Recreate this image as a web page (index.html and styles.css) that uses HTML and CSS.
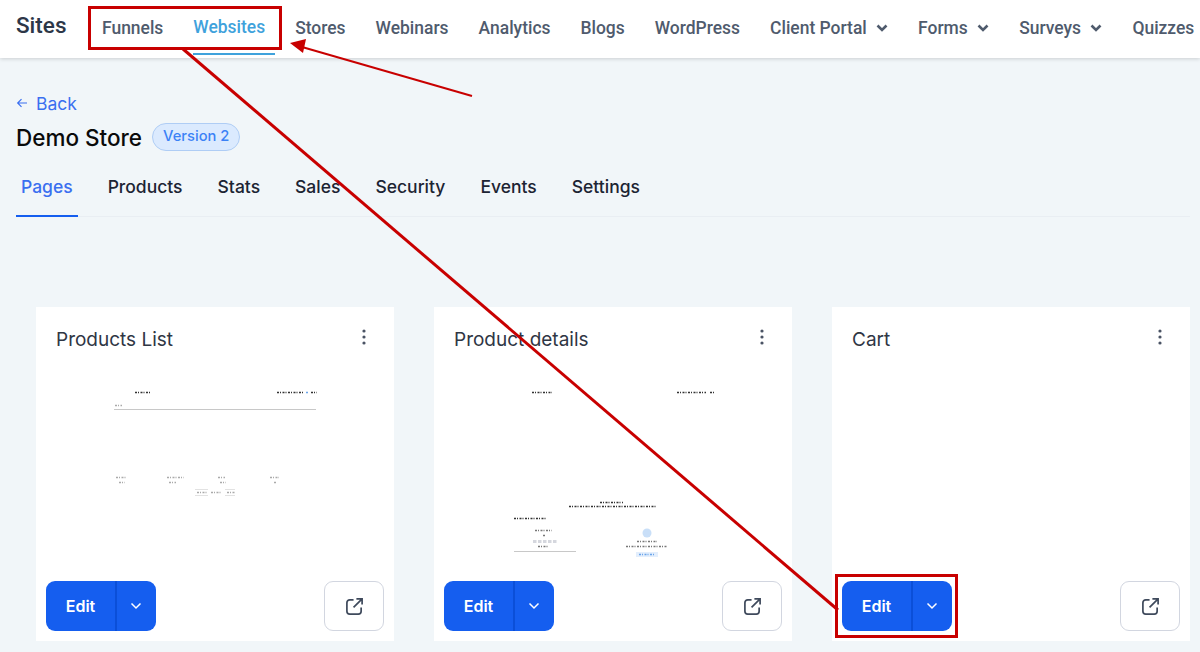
FILE: index.html
```html
<!DOCTYPE html>
<html lang="en">
<head>
    <meta charset="UTF-8">
    <title>Demo Store</title>
    <link rel="stylesheet" href="styles.css">
</head>
<body>
    <header class="top-bar">
        <div class="brand">Sites</div>
        <nav class="top-nav">
            <a>Funnels</a>
            <a class="active">Websites</a>
            <a>Stores</a>
            <a>Webinars</a>
            <a>Analytics</a>
            <a>Blogs</a>
            <a>WordPress</a>
            <a>Client Portal <svg class="caret" viewBox="0 0 12 8"><path d="M1.5 1.5L6 6l4.5-4.5"/></svg></a>
            <a>Forms <svg class="caret" viewBox="0 0 12 8"><path d="M1.5 1.5L6 6l4.5-4.5"/></svg></a>
            <a>Surveys <svg class="caret" viewBox="0 0 12 8"><path d="M1.5 1.5L6 6l4.5-4.5"/></svg></a>
            <a>Quizzes</a>
        </nav>
    </header>

    <main class="content">
        <a class="back"><svg viewBox="0 0 12 12"><path d="M11 6H2M5.5 2.2L1.7 6l3.8 3.8"/></svg>Back</a>
        <div class="title-row">
            <h1>Demo Store</h1>
            <span class="badge">Version 2</span>
        </div>
        <div class="tabs">
            <a class="active">Pages</a>
            <a>Products</a>
            <a>Stats</a>
            <a>Sales</a>
            <a>Security</a>
            <a>Events</a>
            <a>Settings</a>
        </div>

        <div class="cards">
            <div class="card">
                <div class="card-head">
                    <span>Products List</span>
                    <svg class="dots" viewBox="0 0 4 16"><circle cx="2" cy="2" r="1.6"/><circle cx="2" cy="8" r="1.6"/><circle cx="2" cy="14" r="1.6"/></svg>
                </div>
                <!-- scaled down page preview, text is only specks at this size -->
                <svg class="thumb" viewBox="0 0 358 210">
                    <path class="speck" d="M99 21.5H114M241 21.5H268M275 21.5H281"/>
                    <path class="speck-blue" d="M270 21.5H273"/>
                    <path class="speck-pale" d="M79 34.5H86"/>
                    <path class="rule" d="M78 38.5H280"/>
                    <path class="speck-pale" d="M80 106.5H91M131 106.5H148M182 106.5H189M234 106.5H243M83 111.5H89M133 111.5H140M184 111.5H190M238 111.5H241"/>
                    <path class="speck-pale" d="M161 121.5H172M175 121.5H186M191 121.5H199"/>
                    <path class="rule-pale" d="M159 118.5H172M159 124.5H172M189 118.5H199M189 124.5H199"/>
                </svg>
                <div class="card-foot">
                    <div class="edit-group">
                        <button class="edit">Edit</button>
                        <button class="edit-more"><svg viewBox="0 0 12 8"><path d="M1.5 1.5L6 6l4.5-4.5"/></svg></button>
                    </div>
                    <button class="open-link"><svg viewBox="0 0 20 20"><path d="M9 3H5a3 3 0 0 0-3 3v9a3 3 0 0 0 3 3h9a3 3 0 0 0 3-3v-4M12 2h6v6M18 2l-9 9"/></svg></button>
                </div>
            </div>

            <div class="card">
                <div class="card-head">
                    <span>Product details</span>
                    <svg class="dots" viewBox="0 0 4 16"><circle cx="2" cy="2" r="1.6"/><circle cx="2" cy="8" r="1.6"/><circle cx="2" cy="14" r="1.6"/></svg>
                </div>
                <svg class="thumb" viewBox="0 0 358 210">
                    <path class="speck" d="M98 21.5H118M243 21.5H272M276 21.5H281"/>
                    <path class="speck" d="M166 131.5H189M135 135.5H223M80 147.5H113"/>
                    <path class="speck-mid" d="M101 159.5H118M109 164.5H112M104 175.5H114M203 170.5H223M192 175.5H233"/>
                    <path class="stars" d="M99 170.5H123"/>
                    <path class="rule" d="M80 180.5H142"/>
                    <circle cx="213" cy="162" r="4.5" fill="#c9dff8"/>
                    <rect x="202" y="181" width="22" height="5" fill="#e3eefc"/>
                    <path class="speck-blue" d="M205 183.5H221"/>
                </svg>
                <div class="card-foot">
                    <div class="edit-group">
                        <button class="edit">Edit</button>
                        <button class="edit-more"><svg viewBox="0 0 12 8"><path d="M1.5 1.5L6 6l4.5-4.5"/></svg></button>
                    </div>
                    <button class="open-link"><svg viewBox="0 0 20 20"><path d="M9 3H5a3 3 0 0 0-3 3v9a3 3 0 0 0 3 3h9a3 3 0 0 0 3-3v-4M12 2h6v6M18 2l-9 9"/></svg></button>
                </div>
            </div>

            <div class="card">
                <div class="card-head">
                    <span>Cart</span>
                    <svg class="dots" viewBox="0 0 4 16"><circle cx="2" cy="2" r="1.6"/><circle cx="2" cy="8" r="1.6"/><circle cx="2" cy="14" r="1.6"/></svg>
                </div>
                <div class="thumb"></div>
                <div class="card-foot">
                    <div class="edit-group">
                        <button class="edit">Edit</button>
                        <button class="edit-more"><svg viewBox="0 0 12 8"><path d="M1.5 1.5L6 6l4.5-4.5"/></svg></button>
                    </div>
                    <button class="open-link"><svg viewBox="0 0 20 20"><path d="M9 3H5a3 3 0 0 0-3 3v9a3 3 0 0 0 3 3h9a3 3 0 0 0 3-3v-4M12 2h6v6M18 2l-9 9"/></svg></button>
                </div>
            </div>
        </div>
    </main>

    <!-- red annotations drawn over the screenshot -->
    <svg class="marks" viewBox="0 0 1200 652">
        <g fill="none" stroke="#c80000" stroke-width="3">
            <rect x="89.5" y="7.5" width="191" height="41"/>
            <rect x="836.5" y="575.5" width="120" height="61"/>
            <path d="M183 49L838 610"/>
            <path d="M472 96L302 47" stroke-width="2"/>
        </g>
        <path d="M290 43L306 39L303 53Z" fill="#c80000"/>
    </svg>
</body>
</html>
```

FILE: styles.css
```css
html, body {
    height: 652px;
    overflow: hidden;
}
body {
    font-family: Inter, 'Liberation Sans', sans-serif;
    margin: 0;
    padding: 0;
    background-color: #f1f6f9;
    position: relative;
}
.top-bar {
    height: 58px;
    background-color: white;
    box-shadow: 0 1px 4px rgba(0,0,0,0.16);
    display: flex;
    font-family: Roboto, sans-serif;
    padding-left: 16px;
    white-space: nowrap;
    overflow: hidden;
}
.brand {
    font-size: 22.5px;
    font-weight: 500;
    color: #2d3748;
    line-height: 50px;
    width: 86px;
    flex: none;
}
.top-nav {
    display: flex;
    gap: 30px;
    font-size: 17.47px;
    font-weight: 500;
    color: #4f5b6d;
}
.top-nav a {
    line-height: 56px;
    height: 55px;
    display: block;
}
.top-nav a.active {
    color: #3fa2dc;
    line-height: 54px;
    position: relative;
}
.top-nav a.active::after {
    content: "";
    position: absolute;
    left: 0;
    right: -10px;
    bottom: 0;
    height: 2px;
    background-color: #3fa2dc;
}
.caret {
    width: 12px;
    height: 8px;
    margin-left: 5px;
    vertical-align: 2px;
    fill: none;
    stroke: #4f5b6d;
    stroke-width: 2.6;
}
.content {
    padding: 0 10px 0 16px;
}
.back {
    display: flex;
    align-items: center;
    margin-top: 35px;
    height: 20px;
    font-size: 17.5px;
    color: #3a6ff0;
}
.back svg {
    width: 12px;
    height: 12px;
    margin-right: 8px;
    fill: none;
    stroke: #3a6ff0;
    stroke-width: 1.2;
}
.title-row {
    display: flex;
    align-items: center;
    gap: 10px;
    margin-top: 10px;
    height: 28px;
}
h1 {
    margin: 0;
    font-size: 22.5px;
    font-weight: 500;
    color: #0a0a0a;
}
.badge {
    height: 28px;
    line-height: 25px;
    box-sizing: border-box;
    padding: 0 10px;
    font-size: 14.7px;
    font-weight: 500;
    color: #3b82f6;
    background-color: #dbeafe;
    border: 1px solid #afcdf5;
    border-radius: 14px;
}
.tabs {
    display: flex;
    gap: 25px;
    margin-top: 13px;
    height: 52px;
    border-bottom: 1px solid #e9eef3;
    font-size: 17.5px;
    font-weight: 500;
    color: #1c2433;
}
.tabs a {
    padding: 0 5px;
    line-height: 46px;
    height: 51px;
}
.tabs a.active {
    color: #3a6ff0;
    border-bottom: 2px solid #155eef;
}
.cards {
    display: flex;
    gap: 40px;
    margin: 90px 0 0 20px;
}
.card {
    width: 358px;
    height: 334px;
    background-color: white;
    display: flex;
    flex-direction: column;
}
.card-head {
    height: 64px;
    flex: none;
    display: flex;
    justify-content: space-between;
    align-items: center;
    padding: 0 28px 0 20px;
    font-size: 19px;
    color: #2f3644;
    box-sizing: border-box;
}
.dots {
    width: 4px;
    height: 16px;
    fill: #4a5364;
    margin-top: -4px;
}
.thumb {
    display: block;
    width: 358px;
    height: 210px;
    flex: none;
}
.speck, .speck-mid, .speck-pale, .speck-blue, .stars {
    fill: none;
    stroke-width: 1.5;
    stroke-dasharray: 2 1 1 1.5;
}
.speck {
    stroke: #333;
}
.speck-mid {
    stroke: #777;
}
.speck-pale {
    stroke: #aaa;
}
.speck-blue {
    stroke: #6aa5ea;
}
.stars {
    stroke: #d5d7de;
    stroke-width: 3;
    stroke-dasharray: 3.5 1.5;
}
.rule {
    stroke: #c8c8c8;
    stroke-width: 1;
}
.rule-pale {
    stroke: #e2e2e2;
    stroke-width: 1;
}
.card-foot {
    display: flex;
    justify-content: space-between;
    padding: 0 10px;
}
.edit-group {
    display: flex;
    width: 110px;
    height: 50px;
    border-radius: 9px;
    overflow: hidden;
}
button {
    border: none;
    padding: 0;
    font-family: inherit;
    cursor: pointer;
}
.edit {
    width: 71px;
    background-color: #155eef;
    color: white;
    font-size: 16px;
    font-weight: 600;
    border-right: 2px solid #0b4fd8;
}
.edit-more {
    flex: 1;
    background-color: #155eef;
    display: flex;
    align-items: center;
    justify-content: center;
    padding-right: 2px;
}
.edit-more svg {
    width: 12px;
    height: 8px;
    fill: none;
    stroke: white;
    stroke-width: 1.5;
}
.open-link {
    width: 60px;
    height: 50px;
    background-color: white;
    border: 1px solid #d2d6e0;
    border-radius: 9px;
    display: flex;
    align-items: center;
    justify-content: center;
}
.open-link svg {
    width: 19px;
    height: 19px;
    fill: none;
    stroke: #3f4a5c;
    stroke-width: 1.8;
}
.marks {
    position: absolute;
    left: 0;
    top: 0;
    width: 1200px;
    height: 652px;
    pointer-events: none;
}
```
